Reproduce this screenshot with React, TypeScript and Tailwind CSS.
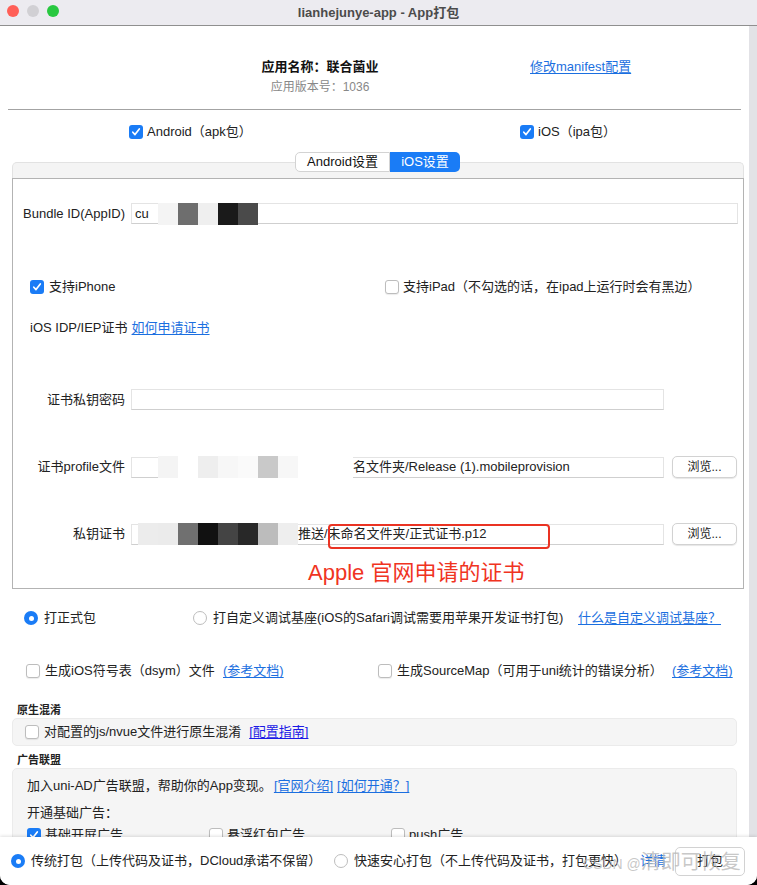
import React from "react";

const font = "font-['Liberation_Sans','Noto_Sans_CJK_SC',sans-serif]";

const Checkbox = ({ checked }: { checked?: boolean }) =>
  checked ? (
    <span className="flex h-[14px] w-[14px] shrink-0 items-center justify-center rounded-[3px] bg-[#1a7cf6]">
      <svg width="10" height="10" viewBox="0 0 10 10">
        <path d="M1.8 5.2 L4 7.6 L8.3 2" fill="none" stroke="white" strokeWidth="1.7" strokeLinecap="round" strokeLinejoin="round" />
      </svg>
    </span>
  ) : (
    <span className="block h-[14px] w-[14px] shrink-0 rounded-[3px] border border-[#bdbdbd] bg-white shadow-[0_1px_1px_rgba(0,0,0,0.08)]" />
  );

const Radio = ({ checked }: { checked?: boolean }) =>
  checked ? (
    <span className="flex h-[14px] w-[14px] shrink-0 items-center justify-center rounded-full bg-[#1a7cf6]">
      <span className="block h-[5px] w-[5px] rounded-full bg-white" />
    </span>
  ) : (
    <span className="block h-[14px] w-[14px] shrink-0 rounded-full border border-[#bdbdbd] bg-white" />
  );

// 마스킹 블록 (blurred 영역)
const Blocks = ({ colors }: { colors: string[] }) => (
  <div className="-my-px flex h-[22px] shrink-0">
    {colors.map((c, i) => (
      <div key={i} className="h-full w-[20px]" style={{ backgroundColor: c }} />
    ))}
  </div>
);

const Browse = () => (
  <button className="ml-[8px] h-[22px] w-[65px] shrink-0 rounded-[5px] border border-[#d2d2d2] bg-white text-[12px] leading-[20px] text-[#222] shadow-[0_1px_1px_rgba(0,0,0,0.1)]">
    浏览...
  </button>
);

export default function App() {
  return (
    <div className={`h-[885px] w-[757px] overflow-hidden whitespace-nowrap bg-black ${font}`}>
      <div className="relative h-[885px] w-[757px] overflow-hidden rounded-b-[10px] bg-white">
        {/* title bar */}
        <div className="relative flex h-[26px] items-center justify-center border-b border-[#8f8f8f] bg-[#ecebf0]">
          <div className="absolute left-[7px] top-[5px] flex gap-[8px]">
            <span className="block h-[12px] w-[12px] rounded-full bg-[#ff5f57]" />
            <span className="block h-[12px] w-[12px] rounded-full bg-[#d1d0d4]" />
            <span className="block h-[12px] w-[12px] rounded-full bg-[#28c840]" />
          </div>
          <span className="text-[13px] font-semibold text-[#4b4b4b]">lianhejunye-app - App打包</span>
        </div>

        <div className="flex">
          <div className="w-[749px] shrink-0">
            {/* header */}
            <div className="mx-[8px] flex h-[84px] border-b border-[#a3a3a3] pt-[32px]">
              <div className="ml-[232px] flex w-[160px] shrink-0 flex-col items-center">
                <span className="text-[13px] font-semibold leading-[18px] text-[#111]">应用名称：联合菌业</span>
                <span className="mt-[2px] text-[12px] leading-[18px] text-[#888]">应用版本号：1036</span>
              </div>
              <a className="ml-[130px] text-[13px] leading-[18px] text-[#1b6fe0] underline underline-offset-2">修改manifest配置</a>
            </div>

            {/* platforms */}
            <div className="mt-[12px] flex h-[20px] items-center text-[13px] text-[#222]">
              <div className="ml-[129px] flex w-[262px] shrink-0 items-center gap-[4px]">
                <Checkbox checked />
                <span>Android（apk包）</span>
              </div>
              <div className="ml-[129px] flex items-center gap-[4px]">
                <Checkbox checked />
                <span>iOS（ipa包）</span>
              </div>
            </div>

            {/* tabs */}
            <div className="relative z-10 mt-[10px] flex h-[20px] justify-center pl-[6px] text-[13px]">
              <div className="flex w-[95px] items-center justify-center rounded-l-[5px] border border-[#d3d3d3] bg-white text-[#111]">Android设置</div>
              <div className="flex w-[70px] items-center justify-center rounded-r-[5px] bg-[#1a7cf6] text-white">iOS设置</div>
            </div>

            <div className="mx-[12px] -mt-[10px] w-[732px]">
              <div className="h-[16px] rounded-t-[5px] border-x border-t border-[#e2e2e2] bg-[#f4f4f4]" />
              <div className="border border-[#b3b3b3] bg-white pb-[3px] pt-[24px] text-[13px] text-[#222]">
                {/* bundle id */}
                <div className="flex h-[21px] items-center pr-[5px]">
                  <span className="w-[112px] shrink-0 text-right">Bundle ID(AppID)</span>
                  <div className="ml-[6px] flex h-[21px] flex-1 items-center border border-[#e4e4e4] border-b-[#cfcfcf]">
                    <span className="w-[26px] shrink-0 pl-[3px]">cu</span>
                    <Blocks colors={["#f4f4f4", "#6e6e6e", "#efefef", "#1a1a1a", "#4a4a4a"]} />
                  </div>
                </div>

                {/* device */}
                <div className="mt-[53px] flex h-[20px] items-center">
                  <div className="ml-[17px] flex w-[355px] shrink-0 items-center gap-[5px]">
                    <Checkbox checked />
                    <span>支持iPhone</span>
                  </div>
                  <div className="flex items-center gap-[4px]">
                    <Checkbox />
                    <span>支持iPad（不勾选的话，在ipad上运行时会有黑边）</span>
                  </div>
                </div>

                <div className="mt-[21px] flex h-[20px] items-center pl-[17px]">
                  <span>iOS IDP/IEP证书</span>
                  <a className="ml-[4px] text-[#1b6fe0] underline underline-offset-2">如何申请证书</a>
                </div>

                {/* password */}
                <div className="mt-[51px] flex h-[21px] items-center">
                  <span className="w-[112px] shrink-0 text-right">证书私钥密码</span>
                  <div className="ml-[6px] h-[21px] w-[533px] shrink-0 border border-[#e4e4e4] border-b-[#cfcfcf]" />
                </div>

                {/* profile */}
                <div className="mt-[46px] flex h-[22px] items-center">
                  <span className="w-[112px] shrink-0 text-right">证书profile文件</span>
                  <div className="ml-[6px] flex h-[21px] w-[533px] shrink-0 items-center border border-[#e4e4e4] border-b-[#cfcfcf]">
                    <div className="ml-[26px] flex h-[21px] shrink-0 items-center bg-white">
                      <Blocks colors={["#f4f4f4", "#ffffff", "#eeeeee", "#f7f7f7", "#fafafa", "#c9c9c9", "#f7f7f7"]} />
                      <div className="h-[23px] w-[55px] bg-white" />
                    </div>
                    <span>名文件夹/Release (1).mobileprovision</span>
                  </div>
                  <Browse />
                </div>

                {/* p12 */}
                <div className="mt-[45px] flex h-[22px] items-center">
                  <span className="w-[112px] shrink-0 text-right">私钥证书</span>
                  <div className="relative ml-[6px] flex h-[21px] w-[533px] shrink-0 items-center border border-[#e4e4e4] border-b-[#cfcfcf]">
                    <span className="w-[6px] shrink-0" />
                    <Blocks colors={["#ececec", "#ebebeb", "#707070", "#111111", "#444444", "#282828", "#bcbcbc", "#eeeeee"]} />
                    <span>推送/未命名文件夹/正式证书.p12</span>
                    <div className="absolute -top-[1px] left-[196px] h-[25px] w-[222px] rounded-[4px] border-2 border-[#ea3323]" />
                  </div>
                  <Browse />
                </div>

                <div className="mt-[15px] pl-[295px] text-[22px] leading-[25px] text-[#f0341f]">Apple 官网申请的证书</div>
              </div>
            </div>

            {/* package type */}
            <div className="mt-[19px] flex h-[20px] items-center text-[13px] text-[#222]">
              <div className="ml-[24px] flex w-[169px] shrink-0 items-center gap-[6px]">
                <Radio checked />
                <span>打正式包</span>
              </div>
              <div className="flex w-[385px] shrink-0 items-center gap-[6px]">
                <Radio />
                <span>打自定义调试基座(iOS的Safari调试需要用苹果开发证书打包)</span>
              </div>
              <a className="text-[#1b6fe0] underline underline-offset-2">什么是自定义调试基座？</a>
            </div>

            <div className="mt-[33px] flex h-[20px] items-center text-[13px] text-[#222]">
              <div className="ml-[26px] flex w-[197px] shrink-0 items-center gap-[5px]">
                <Checkbox />
                <span>生成iOS符号表（dsym）文件</span>
              </div>
              <a className="w-[155px] shrink-0 text-[#1b6fe0] underline underline-offset-2">(参考文档)</a>
              <div className="flex w-[294px] shrink-0 items-center gap-[5px]">
                <Checkbox />
                <span>生成SourceMap（可用于uni统计的错误分析）</span>
              </div>
              <a className="text-[#1b6fe0] underline underline-offset-2">(参考文档)</a>
            </div>

            {/* obfuscation */}
            <div className="ml-[17px] mt-[21px] h-[16px] text-[11px] font-semibold leading-[16px] text-[#222]">原生混淆</div>
            <div className="mx-[12px] flex h-[28px] items-center rounded-[5px] border border-[#ebebeb] bg-[#f5f5f5] pl-[12px] text-[13px] text-[#222]">
              <Checkbox />
              <span className="ml-[5px]">对配置的js/nvue文件进行原生混淆</span>
              <a className="ml-[8px] text-[#1a1ae6] underline underline-offset-2">[配置指南]</a>
            </div>

            {/* ad */}
            <div className="ml-[17px] mt-[7px] h-[15px] text-[11px] font-semibold leading-[15px] text-[#222]">广告联盟</div>
            <div className="mx-[12px] h-[140px] rounded-[5px] border border-[#ebebeb] bg-[#f5f5f5] pl-[14px] pt-[8px] text-[13px] text-[#222]">
              <div className="flex h-[18px] items-center">
                <span>加入uni-AD广告联盟，帮助你的App变现。</span>
                <a className="ml-[2px] text-[#1b6fe0] underline underline-offset-2">[官网介绍]</a>
                <a className="ml-[4px] text-[#1b6fe0] underline underline-offset-2">[如何开通？]</a>
              </div>
              <div className="mt-[9px] h-[18px] leading-[18px]">开通基础广告：</div>
              <div className="mt-[4px] flex h-[18px] items-center">
                <div className="flex w-[182px] shrink-0 items-center gap-[4px]">
                  <Checkbox checked />
                  <span>基础开屏广告</span>
                </div>
                <div className="flex w-[182px] shrink-0 items-center gap-[4px]">
                  <Checkbox />
                  <span>悬浮红包广告</span>
                </div>
                <div className="flex items-center gap-[4px]">
                  <Checkbox />
                  <span>push广告</span>
                </div>
              </div>
            </div>
          </div>

          {/* scrollbar */}
          <div className="h-[811px] w-[8px] shrink-0 bg-[#e2e2e6]" />
        </div>

        {/* bottom bar */}
        <div className="absolute bottom-0 left-0 flex h-[48px] w-[757px] items-center bg-white text-[13px] text-[#222] shadow-[0_-1px_3px_rgba(0,0,0,0.12)]">
          <div className="ml-[11px] flex w-[323px] shrink-0 items-center gap-[6px]">
            <Radio checked />
            <span>传统打包（上传代码及证书，DCloud承诺不保留）</span>
          </div>
          <div className="flex w-[306px] shrink-0 items-center gap-[6px]">
            <Radio />
            <span>快速安心打包（不上传代码及证书，打包更快）</span>
          </div>
          <a className="shrink-0 text-[#1b6fe0]">详情</a>
          <button className="ml-[9px] h-[29px] w-[70px] shrink-0 rounded-[5px] border border-[#d2d2d2] bg-white text-[13px] text-[#222]">打包</button>
          <div className="pointer-events-none absolute left-[583px] top-[10px] flex items-baseline text-[#b9b9b9]/80">
            <span className="text-[14px]">CSDN @</span>
            <span className="text-[20px]">清即可恢复</span>
          </div>
        </div>
      </div>
    </div>
  );
}
